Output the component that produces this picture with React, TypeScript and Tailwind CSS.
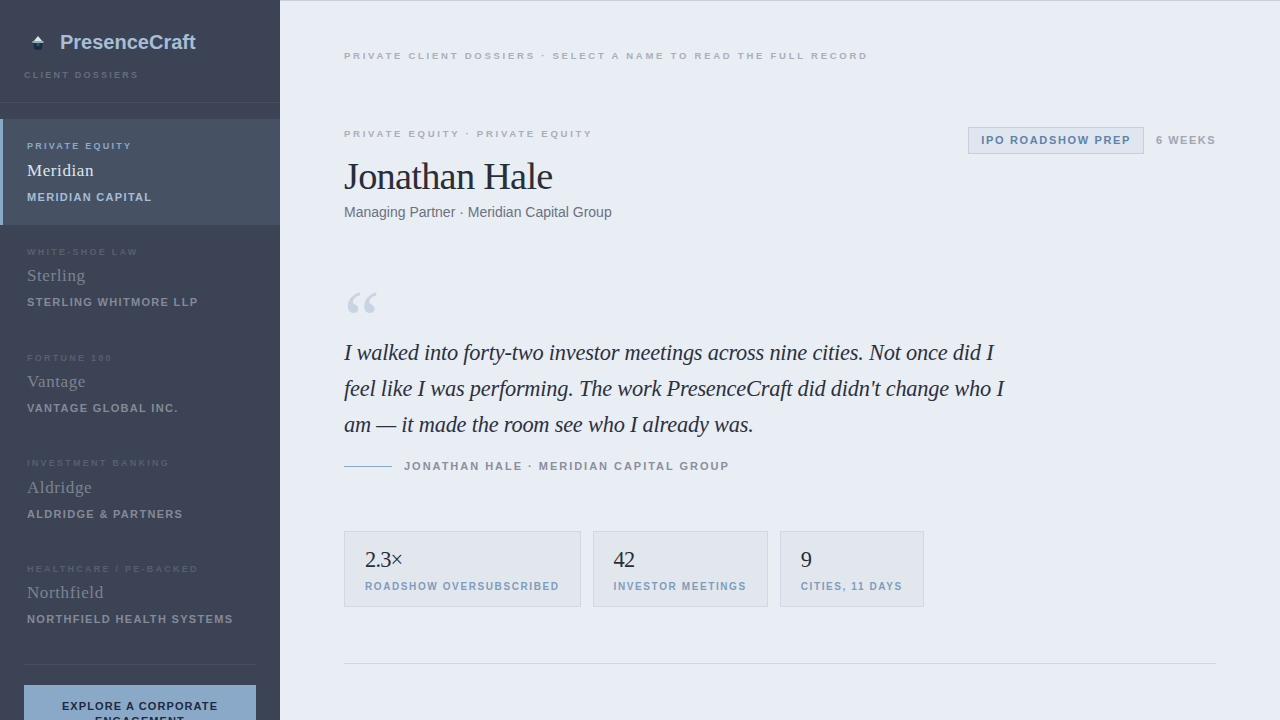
import React from 'react';

const clients = [
  { tag: 'Private Equity', name: 'Meridian', firm: 'Meridian Capital', active: true },
  { tag: 'White-Shoe Law', name: 'Sterling', firm: 'Sterling Whitmore LLP' },
  { tag: 'Fortune 100', name: 'Vantage', firm: 'Vantage Global Inc.' },
  { tag: 'Investment Banking', name: 'Aldridge', firm: 'Aldridge & Partners' },
  { tag: 'Healthcare / PE-Backed', name: 'Northfield', firm: 'Northfield Health Systems' },
];

const stats = [
  { value: '2.3×', label: 'Roadshow oversubscribed' },
  { value: '42', label: 'Investor meetings' },
  { value: '9', label: 'Cities, 11 days' },
];

const sans = 'font-["Liberation_Sans",Arial,sans-serif]';
const serif = 'font-["Liberation_Serif","Times_New_Roman",serif]';

// Small emblem next to the brand name
const Logo = () => (
  <svg width="16" height="18" viewBox="0 0 16 18" className="shrink-0">
    <path d="M8 3 L13 9 H3 Z" fill="#dfe6e4" />
    <rect x="2.5" y="8" width="11" height="2" fill="#8fb0b5" />
    <path d="M3.5 10 H12.5 L12 16 Q8 18 4 16 Z" fill="#1a2c45" />
    <rect x="6.5" y="10" width="3" height="3" fill="#2d5560" />
  </svg>
);

export default function App() {
  return (
    <div className={`flex h-[720px] w-[1280px] overflow-hidden bg-[#e9edf4] ${sans}`}>
      <aside className="flex h-full w-[280px] shrink-0 flex-col overflow-hidden bg-[#3c4354]">
        <div className="h-[103px] shrink-0 border-b border-[#484f5f] px-6 pt-[28px]">
          <div className="flex h-[28px] items-center gap-[14px] pl-[6px]">
            <Logo />
            <span className="text-[20px] font-bold leading-[28px] text-[#a8bdd6]">PresenceCraft</span>
          </div>
          <div className="mt-[13px] text-[9px] font-bold uppercase leading-[12px] tracking-[0.25em] text-[#666d7d]">
            Client Dossiers
          </div>
        </div>

        <nav className="flex shrink-0 flex-col pt-4">
          {clients.map(c => (
            <div
              key={c.name}
              className={`h-[105.75px] border-l-[3px] pl-6 pt-[21px] ${
                c.active ? 'border-[#8aa8c8] bg-[#465263]' : 'border-transparent'
              }`}
            >
              <div
                className={`text-[9px] font-bold uppercase leading-[12px] tracking-[0.25em] ${
                  c.active ? 'text-[#8aa8c8]' : 'text-[#585f70]'
                }`}
              >
                {c.tag}
              </div>
              <div
                className={`text-[17px] leading-[24px] tracking-[0.035em] ${serif} ${
                  c.active ? 'mt-[6.5px] text-[#dfe5ed]' : 'mt-[6.25px] text-[#7d8391]'
                }`}
              >
                {c.name}
              </div>
              <div
                className={`mt-[7px] text-[11px] font-bold uppercase leading-[14px] tracking-[0.12em] ${
                  c.active ? 'text-[#a8bdd6]' : 'text-[#848a98]'
                }`}
              >
                {c.firm}
              </div>
            </div>
          ))}
        </nav>

        <div className="mx-6 mt-[15.75px] border-t border-[#484f5f] pt-5">
          <div className="bg-[#8aa8c8] px-6 pt-[14px] text-center text-[11px] font-bold uppercase leading-[15px] tracking-[0.1em] text-[#1e2a3e]">
            Explore a corporate engagement
          </div>
        </div>
      </aside>

      <main className="h-full min-w-0 flex-1 overflow-hidden border-t border-[#c8d0dc] px-16 pt-[48px]">
        <div className="text-[9.5px] font-bold uppercase leading-[13px] tracking-[0.29em] text-[#a9afba]">
          Private client dossiers · Select a name to read the full record
        </div>

        <div className="mt-[65px] flex items-start justify-between">
          <div>
            <div className="text-[9.5px] font-bold uppercase leading-[13px] tracking-[0.29em] text-[#a9afba]">
              Private Equity · Private Equity
            </div>
            <h1 className={`mt-[13px] text-[38.4px] font-normal leading-[46px] tracking-[-0.02em] text-[#2a2e38] ${serif}`}>
              Jonathan Hale
            </h1>
            <div className="mt-[3px] text-[14px] leading-[20px] text-[#6b7280]">
              Managing Partner · Meridian Capital Group
            </div>
          </div>
          <div className="flex items-center gap-3">
            <span className="flex h-[27px] items-center border border-[#c4d0de] bg-[#e0e6ef] px-3 text-[11px] font-bold uppercase tracking-[0.15em] text-[#5f82a8]">
              IPO Roadshow Prep
            </span>
            <span className="text-[11px] font-bold uppercase tracking-[1.5px] text-[#a0a6b2]">6 weeks</span>
          </div>
        </div>

        <div className={`mt-[69px] h-[44px] text-[80px] leading-[56px] text-[#c8d4e2] ${serif}`}>“</div>
        <p className={`w-[680px] text-[22.4px] italic leading-[36px] tracking-[-0.01em] text-[#2c3140] ${serif}`}>
          I walked into forty-two investor meetings across nine cities. Not once did I feel like I was performing. The work PresenceCraft did didn't change who I am — it made the room see who I already was.
        </p>
        <div className="mt-[16px] flex items-center gap-3">
          <span className="h-px w-12 bg-[#8aa8c8]" />
          <span className="text-[11px] font-bold uppercase leading-[14px] tracking-[0.18em] text-[#8a8f9c]">
            Jonathan Hale · Meridian Capital Group
          </span>
        </div>

        <div className="mt-[58px] flex gap-3">
          {stats.map(s => (
            <div key={s.label} className="h-[76px] border border-[#d0d8e4] bg-[#e2e7ee] px-5 pt-[15px]">
              <div className={`text-[22.4px] leading-[26px] tracking-[-0.8px] text-[#2a2e38] ${serif}`}>{s.value}</div>
              <div className="mt-[7px] whitespace-nowrap text-[10px] font-bold uppercase leading-[13px] tracking-[0.16em] text-[#7f9cbd]">
                {s.label}
              </div>
            </div>
          ))}
        </div>

        <div className="mt-[56px] h-px bg-[#d0d7e2]" />
      </main>
    </div>
  );
}
